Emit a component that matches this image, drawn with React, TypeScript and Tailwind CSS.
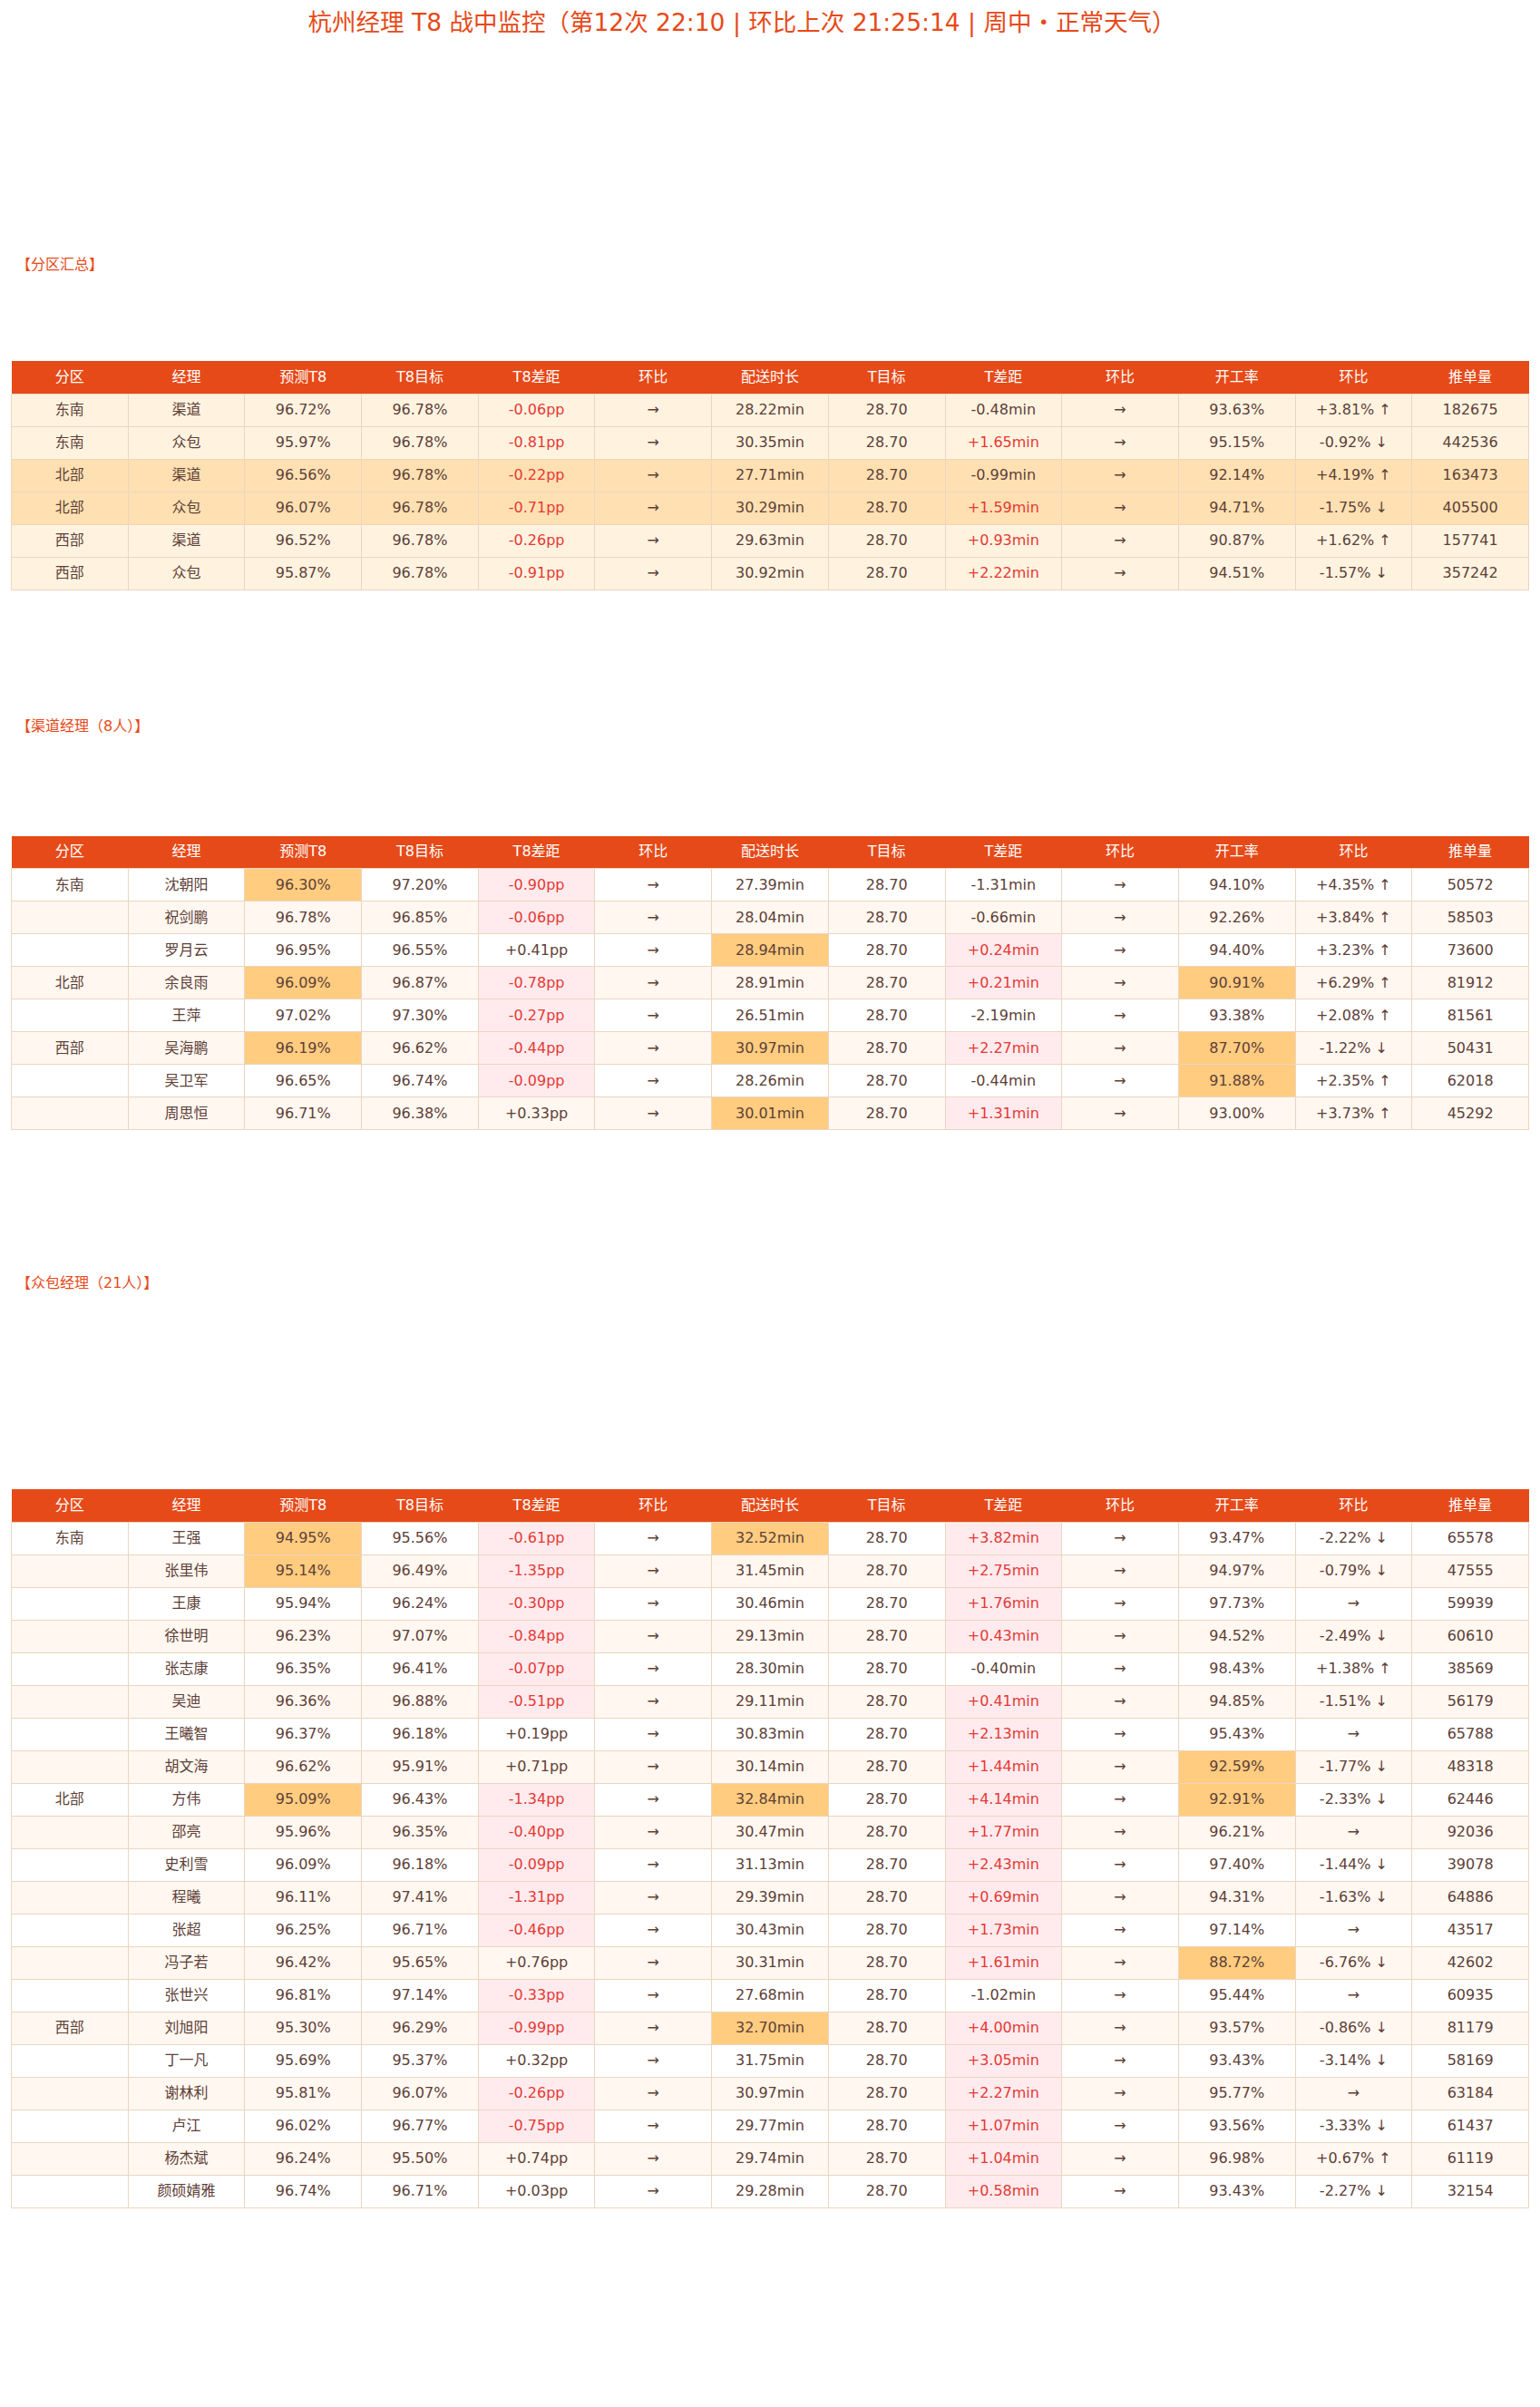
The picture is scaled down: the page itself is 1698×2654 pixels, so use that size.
import React from "react";

// 列头（三张表一致）
const HEADERS = [
  "分区",
  "经理",
  "预测T8",
  "T8目标",
  "T8差距",
  "环比",
  "配送时长",
  "T目标",
  "T差距",
  "环比",
  "开工率",
  "环比",
  "推单量",
];

type Row = {
  cells: string[];
  hl?: number[]; // 需要高亮（橙色）的列
};

const summaryRows: Row[] = [
  { cells: ["东南", "渠道", "96.72%", "96.78%", "-0.06pp", "→", "28.22min", "28.70", "-0.48min", "→", "93.63%", "+3.81% ↑", "182675"] },
  { cells: ["东南", "众包", "95.97%", "96.78%", "-0.81pp", "→", "30.35min", "28.70", "+1.65min", "→", "95.15%", "-0.92% ↓", "442536"] },
  { cells: ["北部", "渠道", "96.56%", "96.78%", "-0.22pp", "→", "27.71min", "28.70", "-0.99min", "→", "92.14%", "+4.19% ↑", "163473"] },
  { cells: ["北部", "众包", "96.07%", "96.78%", "-0.71pp", "→", "30.29min", "28.70", "+1.59min", "→", "94.71%", "-1.75% ↓", "405500"] },
  { cells: ["西部", "渠道", "96.52%", "96.78%", "-0.26pp", "→", "29.63min", "28.70", "+0.93min", "→", "90.87%", "+1.62% ↑", "157741"] },
  { cells: ["西部", "众包", "95.87%", "96.78%", "-0.91pp", "→", "30.92min", "28.70", "+2.22min", "→", "94.51%", "-1.57% ↓", "357242"] },
];

const channelRows: Row[] = [
  { cells: ["东南", "沈朝阳", "96.30%", "97.20%", "-0.90pp", "→", "27.39min", "28.70", "-1.31min", "→", "94.10%", "+4.35% ↑", "50572"], hl: [2] },
  { cells: ["", "祝剑鹏", "96.78%", "96.85%", "-0.06pp", "→", "28.04min", "28.70", "-0.66min", "→", "92.26%", "+3.84% ↑", "58503"] },
  { cells: ["", "罗月云", "96.95%", "96.55%", "+0.41pp", "→", "28.94min", "28.70", "+0.24min", "→", "94.40%", "+3.23% ↑", "73600"], hl: [6] },
  { cells: ["北部", "余良雨", "96.09%", "96.87%", "-0.78pp", "→", "28.91min", "28.70", "+0.21min", "→", "90.91%", "+6.29% ↑", "81912"], hl: [2, 10] },
  { cells: ["", "王萍", "97.02%", "97.30%", "-0.27pp", "→", "26.51min", "28.70", "-2.19min", "→", "93.38%", "+2.08% ↑", "81561"] },
  { cells: ["西部", "吴海鹏", "96.19%", "96.62%", "-0.44pp", "→", "30.97min", "28.70", "+2.27min", "→", "87.70%", "-1.22% ↓", "50431"], hl: [2, 6, 10] },
  { cells: ["", "吴卫军", "96.65%", "96.74%", "-0.09pp", "→", "28.26min", "28.70", "-0.44min", "→", "91.88%", "+2.35% ↑", "62018"], hl: [10] },
  { cells: ["", "周思恒", "96.71%", "96.38%", "+0.33pp", "→", "30.01min", "28.70", "+1.31min", "→", "93.00%", "+3.73% ↑", "45292"], hl: [6] },
];

const crowdRows: Row[] = [
  { cells: ["东南", "王强", "94.95%", "95.56%", "-0.61pp", "→", "32.52min", "28.70", "+3.82min", "→", "93.47%", "-2.22% ↓", "65578"], hl: [2, 6] },
  { cells: ["", "张里伟", "95.14%", "96.49%", "-1.35pp", "→", "31.45min", "28.70", "+2.75min", "→", "94.97%", "-0.79% ↓", "47555"], hl: [2] },
  { cells: ["", "王康", "95.94%", "96.24%", "-0.30pp", "→", "30.46min", "28.70", "+1.76min", "→", "97.73%", "→", "59939"] },
  { cells: ["", "徐世明", "96.23%", "97.07%", "-0.84pp", "→", "29.13min", "28.70", "+0.43min", "→", "94.52%", "-2.49% ↓", "60610"] },
  { cells: ["", "张志康", "96.35%", "96.41%", "-0.07pp", "→", "28.30min", "28.70", "-0.40min", "→", "98.43%", "+1.38% ↑", "38569"] },
  { cells: ["", "吴迪", "96.36%", "96.88%", "-0.51pp", "→", "29.11min", "28.70", "+0.41min", "→", "94.85%", "-1.51% ↓", "56179"] },
  { cells: ["", "王曦智", "96.37%", "96.18%", "+0.19pp", "→", "30.83min", "28.70", "+2.13min", "→", "95.43%", "→", "65788"] },
  { cells: ["", "胡文海", "96.62%", "95.91%", "+0.71pp", "→", "30.14min", "28.70", "+1.44min", "→", "92.59%", "-1.77% ↓", "48318"], hl: [10] },
  { cells: ["北部", "方伟", "95.09%", "96.43%", "-1.34pp", "→", "32.84min", "28.70", "+4.14min", "→", "92.91%", "-2.33% ↓", "62446"], hl: [2, 6, 10] },
  { cells: ["", "邵亮", "95.96%", "96.35%", "-0.40pp", "→", "30.47min", "28.70", "+1.77min", "→", "96.21%", "→", "92036"] },
  { cells: ["", "史利雪", "96.09%", "96.18%", "-0.09pp", "→", "31.13min", "28.70", "+2.43min", "→", "97.40%", "-1.44% ↓", "39078"] },
  { cells: ["", "程曦", "96.11%", "97.41%", "-1.31pp", "→", "29.39min", "28.70", "+0.69min", "→", "94.31%", "-1.63% ↓", "64886"] },
  { cells: ["", "张超", "96.25%", "96.71%", "-0.46pp", "→", "30.43min", "28.70", "+1.73min", "→", "97.14%", "→", "43517"] },
  { cells: ["", "冯子若", "96.42%", "95.65%", "+0.76pp", "→", "30.31min", "28.70", "+1.61min", "→", "88.72%", "-6.76% ↓", "42602"], hl: [10] },
  { cells: ["", "张世兴", "96.81%", "97.14%", "-0.33pp", "→", "27.68min", "28.70", "-1.02min", "→", "95.44%", "→", "60935"] },
  { cells: ["西部", "刘旭阳", "95.30%", "96.29%", "-0.99pp", "→", "32.70min", "28.70", "+4.00min", "→", "93.57%", "-0.86% ↓", "81179"], hl: [6] },
  { cells: ["", "丁一凡", "95.69%", "95.37%", "+0.32pp", "→", "31.75min", "28.70", "+3.05min", "→", "93.43%", "-3.14% ↓", "58169"] },
  { cells: ["", "谢林利", "95.81%", "96.07%", "-0.26pp", "→", "30.97min", "28.70", "+2.27min", "→", "95.77%", "→", "63184"] },
  { cells: ["", "卢江", "96.02%", "96.77%", "-0.75pp", "→", "29.77min", "28.70", "+1.07min", "→", "93.56%", "-3.33% ↓", "61437"] },
  { cells: ["", "杨杰斌", "96.24%", "95.50%", "+0.74pp", "→", "29.74min", "28.70", "+1.04min", "→", "96.98%", "+0.67% ↑", "61119"] },
  { cells: ["", "颜硕婧雅", "96.74%", "96.71%", "+0.03pp", "→", "29.28min", "28.70", "+0.58min", "→", "93.43%", "-2.27% ↓", "32154"] },
];

// T8差距为负 / T差距为正 => 标红
function isBad(col: number, value: string) {
  if (col === 4) return value.startsWith("-");
  if (col === 8) return value.startsWith("+");
  return false;
}

function HeaderRow() {
  return (
    <thead>
      <tr className="bg-[#e64a19] text-white">
        {HEADERS.map((h, i) => (
          <th key={i} className="h-[36px] p-0 font-normal text-[16px] border-b border-[#ead6c0]">
            {h}
          </th>
        ))}
      </tr>
    </thead>
  );
}

function SummaryTable({ rows }: { rows: Row[] }) {
  return (
    <table className="w-full table-fixed border-collapse">
      <HeaderRow />
      <tbody>
        {rows.map((row, r) => (
          <tr key={r} className={row.cells[0] === "北部" ? "bg-[#ffe0b2]" : "bg-[#fff3e0]"}>
            {row.cells.map((c, i) => (
              <td
                key={i}
                className={`h-[36px] p-0 text-center border border-[#ead6c0] ${
                  isBad(i, c) ? "text-[#e53935]" : ""
                }`}
              >
                {c}
              </td>
            ))}
          </tr>
        ))}
      </tbody>
    </table>
  );
}

function ManagerTable({ rows }: { rows: Row[] }) {
  return (
    <table className="w-full table-fixed border-collapse">
      <HeaderRow />
      <tbody>
        {rows.map((row, r) => (
          <tr key={r} className={r % 2 === 1 ? "bg-[#fff7f0]" : "bg-white"}>
            {row.cells.map((c, i) => {
              const hl = row.hl?.includes(i);
              const bad = isBad(i, c);
              return (
                <td
                  key={i}
                  className={`h-[36px] p-0 text-center border border-[#ead6c0] ${
                    hl ? "bg-[#ffcc80]" : bad ? "bg-[#ffebee] text-[#e53935]" : ""
                  }`}
                >
                  {c}
                </td>
              );
            })}
          </tr>
        ))}
      </tbody>
    </table>
  );
}

function SectionLabel({ children }: { children: React.ReactNode }) {
  return <div className="h-[24px] leading-[24px] pl-[6px] text-[16px] text-[#e64a19]">{children}</div>;
}

export default function App() {
  return (
    <div
      className="min-h-screen bg-white px-[12px] text-[16px] text-[#5d4037]"
      style={{ fontFamily: '"DejaVu Sans", "Noto Sans CJK SC", sans-serif' }}
    >
      <h1 className="h-[50px] leading-[50px] pr-[62px] text-center text-[26.5px] font-normal text-[#e64a19]">
        杭州经理 T8 战中监控（第12次 22:10 | 环比上次 21:25:14 | 周中・正常天气）
      </h1>

      <div className="mt-[230px]">
        <SectionLabel>【分区汇总】</SectionLabel>
      </div>
      <div className="mt-[94px]">
        <SummaryTable rows={summaryRows} />
      </div>

      <div className="mt-[138px]">
        <SectionLabel>【渠道经理（8人）】</SectionLabel>
      </div>
      <div className="mt-[109px]">
        <ManagerTable rows={channelRows} />
      </div>

      <div className="mt-[157px]">
        <SectionLabel>【众包经理（21人）】</SectionLabel>
      </div>
      <div className="mt-[215px] pb-[220px]">
        <ManagerTable rows={crowdRows} />
      </div>
    </div>
  );
}
